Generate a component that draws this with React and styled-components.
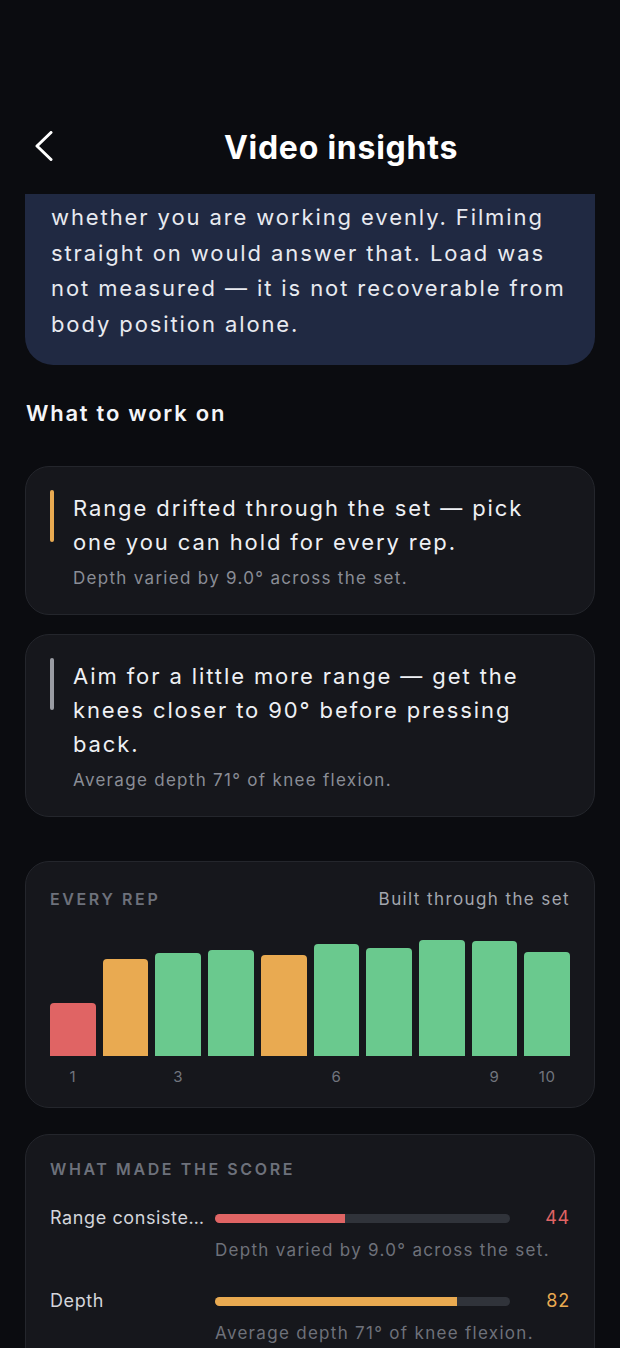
import React from "react";
import styled, { createGlobalStyle } from "styled-components";

const GlobalStyle = createGlobalStyle`
  html, body {
    margin: 0;
    padding: 0;
    background: #0b0c10;
  }
  body {
    font-family: Inter, "Noto Sans", "Liberation Sans", sans-serif;
    -webkit-font-smoothing: antialiased;
  }
  * { box-sizing: border-box; }
`;

const Screen = styled.div`
  width: 620px;
  height: 1348px;
  background: #0b0c10;
  color: #eceef3;
  overflow: hidden;
`;

const Header = styled.header`
  display: flex;
  align-items: center;
  height: 194px;
  padding: 116px 0 18px;
`;

const BackButton = styled.button`
  width: 44px;
  height: 44px;
  margin-left: 22px;
  padding: 0;
  border: none;
  background: none;
  display: flex;
  align-items: center;
  justify-content: center;
  color: #ffffff;
`;

const Title = styled.h1`
  flex: 1;
  margin: 0;
  padding: 4px 4px 0 0;
  text-align: center;
  font-size: 32px;
  line-height: 60px;
  font-weight: 700;
  color: #ffffff;
  letter-spacing: 0.75px;
`;

const Content = styled.main`
  display: flex;
  flex-direction: column;
  padding: 0 25px 40px;
`;

const InfoCard = styled.section`
  background: #202942;
  border-radius: 0 0 28px 28px;
  padding: 6px 26px 23px;
`;

const InfoText = styled.p`
  margin: 0;
  font-size: 22px;
  line-height: 35.5px;
  color: #e8eaf0;
  letter-spacing: 1.9px;
`;

const SectionTitle = styled.h2`
  margin: 34px 1px 39px;
  font-size: 22px;
  line-height: 28px;
  font-weight: 600;
  color: #f4f5f8;
  letter-spacing: 1.75px;
`;

const TipList = styled.div`
  display: flex;
  flex-direction: column;
  gap: 19px;
`;

const Card = styled.div`
  background: #16171c;
  border: 1px solid #24262c;
  border-radius: 24px;
`;

const TipCard = styled(Card)`
  display: flex;
  gap: 19px;
  padding: 24px 20px 24px 24px;
`;

const Accent = styled.div`
  flex: none;
  width: 4px;
  height: 52px;
  margin-top: -1px;
  border-radius: 2px;
  background: ${(p) => p.$color};
`;

const TipBody = styled.div`
  display: flex;
  flex-direction: column;
  gap: 7px;
`;

const TipText = styled.p`
  margin: 0;
  font-size: 22px;
  line-height: 34px;
  color: #eef0f4;
  letter-spacing: 1.9px;
`;

const TipNote = styled.p`
  margin: 0;
  font-size: 17px;
  line-height: 24px;
  color: #8a8d96;
  letter-spacing: 1.3px;
`;

const ChartCard = styled(Card)`
  margin-top: 44px;
  padding: 27px 24px 20px;
`;

const CardHeader = styled.div`
  display: flex;
  justify-content: space-between;
  align-items: center;
`;

const Eyebrow = styled.div`
  font-size: 16px;
  line-height: 20px;
  font-weight: 600;
  letter-spacing: 2.6px;
  color: #6d717b;
`;

const HeaderNote = styled.div`
  font-size: 17px;
  line-height: 20px;
  color: #a3a6ae;
  letter-spacing: 1.4px;
`;

const Bars = styled.div`
  display: grid;
  grid-template-columns: repeat(10, 1fr);
  column-gap: 7px;
  align-items: end;
  height: 120px;
  margin-top: 27px;
`;

const Bar = styled.div`
  border-radius: 4px 4px 0 0;
  background: ${(p) => p.$color};
`;

const BarLabels = styled.div`
  display: grid;
  grid-template-columns: repeat(10, 1fr);
  column-gap: 7px;
  margin-top: 11px;
`;

const BarLabel = styled.span`
  text-align: center;
  font-size: 15px;
  line-height: 20px;
  color: #71757e;
  letter-spacing: 0.5px;
`;

const ScoreCard = styled(Card)`
  margin-top: 26px;
  padding: 24px 24px 20px;
`;

const ScoreGrid = styled.div`
  display: grid;
  grid-template-columns: 155px 1fr 50px;
  column-gap: 10px;
  margin-top: 27px;
`;

const ScoreLabel = styled.div`
  font-size: 18px;
  line-height: 24px;
  color: #d3d5db;
  letter-spacing: 0.6px;
  white-space: nowrap;
  overflow: hidden;
  text-overflow: ellipsis;
`;

const Track = styled.div`
  align-self: center;
  height: 9px;
  border-radius: 5px;
  background: #30333a;
  overflow: hidden;
`;

const Fill = styled.div`
  height: 100%;
  background: ${(p) => p.$color};
`;

const ScoreValue = styled.div`
  text-align: right;
  font-size: 18px;
  line-height: 24px;
  color: ${(p) => p.$color};
  letter-spacing: 0.8px;
`;

const ScoreNote = styled.div`
  grid-column: 2 / 4;
  margin: 8px 0 27px;
  font-size: 17px;
  line-height: 24px;
  color: #6e717a;
  letter-spacing: 1.3px;
  white-space: nowrap;
`;

const RED = "#e06464";
const ORANGE = "#e9aa51";
const GREEN = "#6ac98e";

const reps = [
  { h: 53, c: RED, label: "1" },
  { h: 97, c: ORANGE },
  { h: 103, c: GREEN, label: "3" },
  { h: 106, c: GREEN },
  { h: 101, c: ORANGE },
  { h: 112, c: GREEN, label: "6" },
  { h: 108, c: GREEN },
  { h: 116, c: GREEN },
  { h: 115, c: GREEN, label: "9" },
  { h: 104, c: GREEN, label: "10" },
];

const tips = [
  {
    color: "#e9aa51",
    text: "Range drifted through the set — pick one you can hold for every rep.",
    note: "Depth varied by 9.0° across the set.",
  },
  {
    color: "#9a9ca3",
    text: "Aim for a little more range — get the knees closer to 90° before pressing back.",
    note: "Average depth 71° of knee flexion.",
  },
];

const scores = [
  { label: "Range consistency", value: 44, color: RED, note: "Depth varied by 9.0° across the set." },
  { label: "Depth", value: 82, color: ORANGE, note: "Average depth 71° of knee flexion." },
];

function Chevron() {
  return (
    <svg width="18" height="30" viewBox="0 0 18 30" fill="none">
      <polyline
        points="16,1.5 2,15 16,28.5"
        stroke="currentColor"
        strokeWidth="3"
        strokeLinecap="round"
        strokeLinejoin="round"
      />
    </svg>
  );
}

export default function App() {
  return (
    <Screen>
      <GlobalStyle />
      <Header>
        <BackButton aria-label="Back">
          <Chevron />
        </BackButton>
        <Title>Video insights</Title>
      </Header>
      <Content>
        <InfoCard>
          <InfoText>
            whether you are working evenly. Filming straight on would answer that. Load was
            not measured — it is not recoverable from body position alone.
          </InfoText>
        </InfoCard>

        <SectionTitle>What to work on</SectionTitle>

        <TipList>
          {tips.map((t) => (
            <TipCard key={t.text}>
              <Accent $color={t.color} />
              <TipBody>
                <TipText>{t.text}</TipText>
                <TipNote>{t.note}</TipNote>
              </TipBody>
            </TipCard>
          ))}
        </TipList>

        <ChartCard>
          <CardHeader>
            <Eyebrow>EVERY REP</Eyebrow>
            <HeaderNote>Built through the set</HeaderNote>
          </CardHeader>
          <Bars>
            {reps.map((r, i) => (
              <Bar key={i} $color={r.c} style={{ height: `${r.h}px` }} />
            ))}
          </Bars>
          <BarLabels>
            {reps.map((r, i) => (
              <BarLabel key={i}>{r.label || ""}</BarLabel>
            ))}
          </BarLabels>
        </ChartCard>

        <ScoreCard>
          <Eyebrow>WHAT MADE THE SCORE</Eyebrow>
          <ScoreGrid>
            {scores.map((s) => (
              <React.Fragment key={s.label}>
                <ScoreLabel>{s.label}</ScoreLabel>
                <Track>
                  <Fill $color={s.color} style={{ width: `${s.value}%` }} />
                </Track>
                <ScoreValue $color={s.color}>{s.value}</ScoreValue>
                <ScoreNote>{s.note}</ScoreNote>
              </React.Fragment>
            ))}
          </ScoreGrid>
        </ScoreCard>
      </Content>
    </Screen>
  );
}
